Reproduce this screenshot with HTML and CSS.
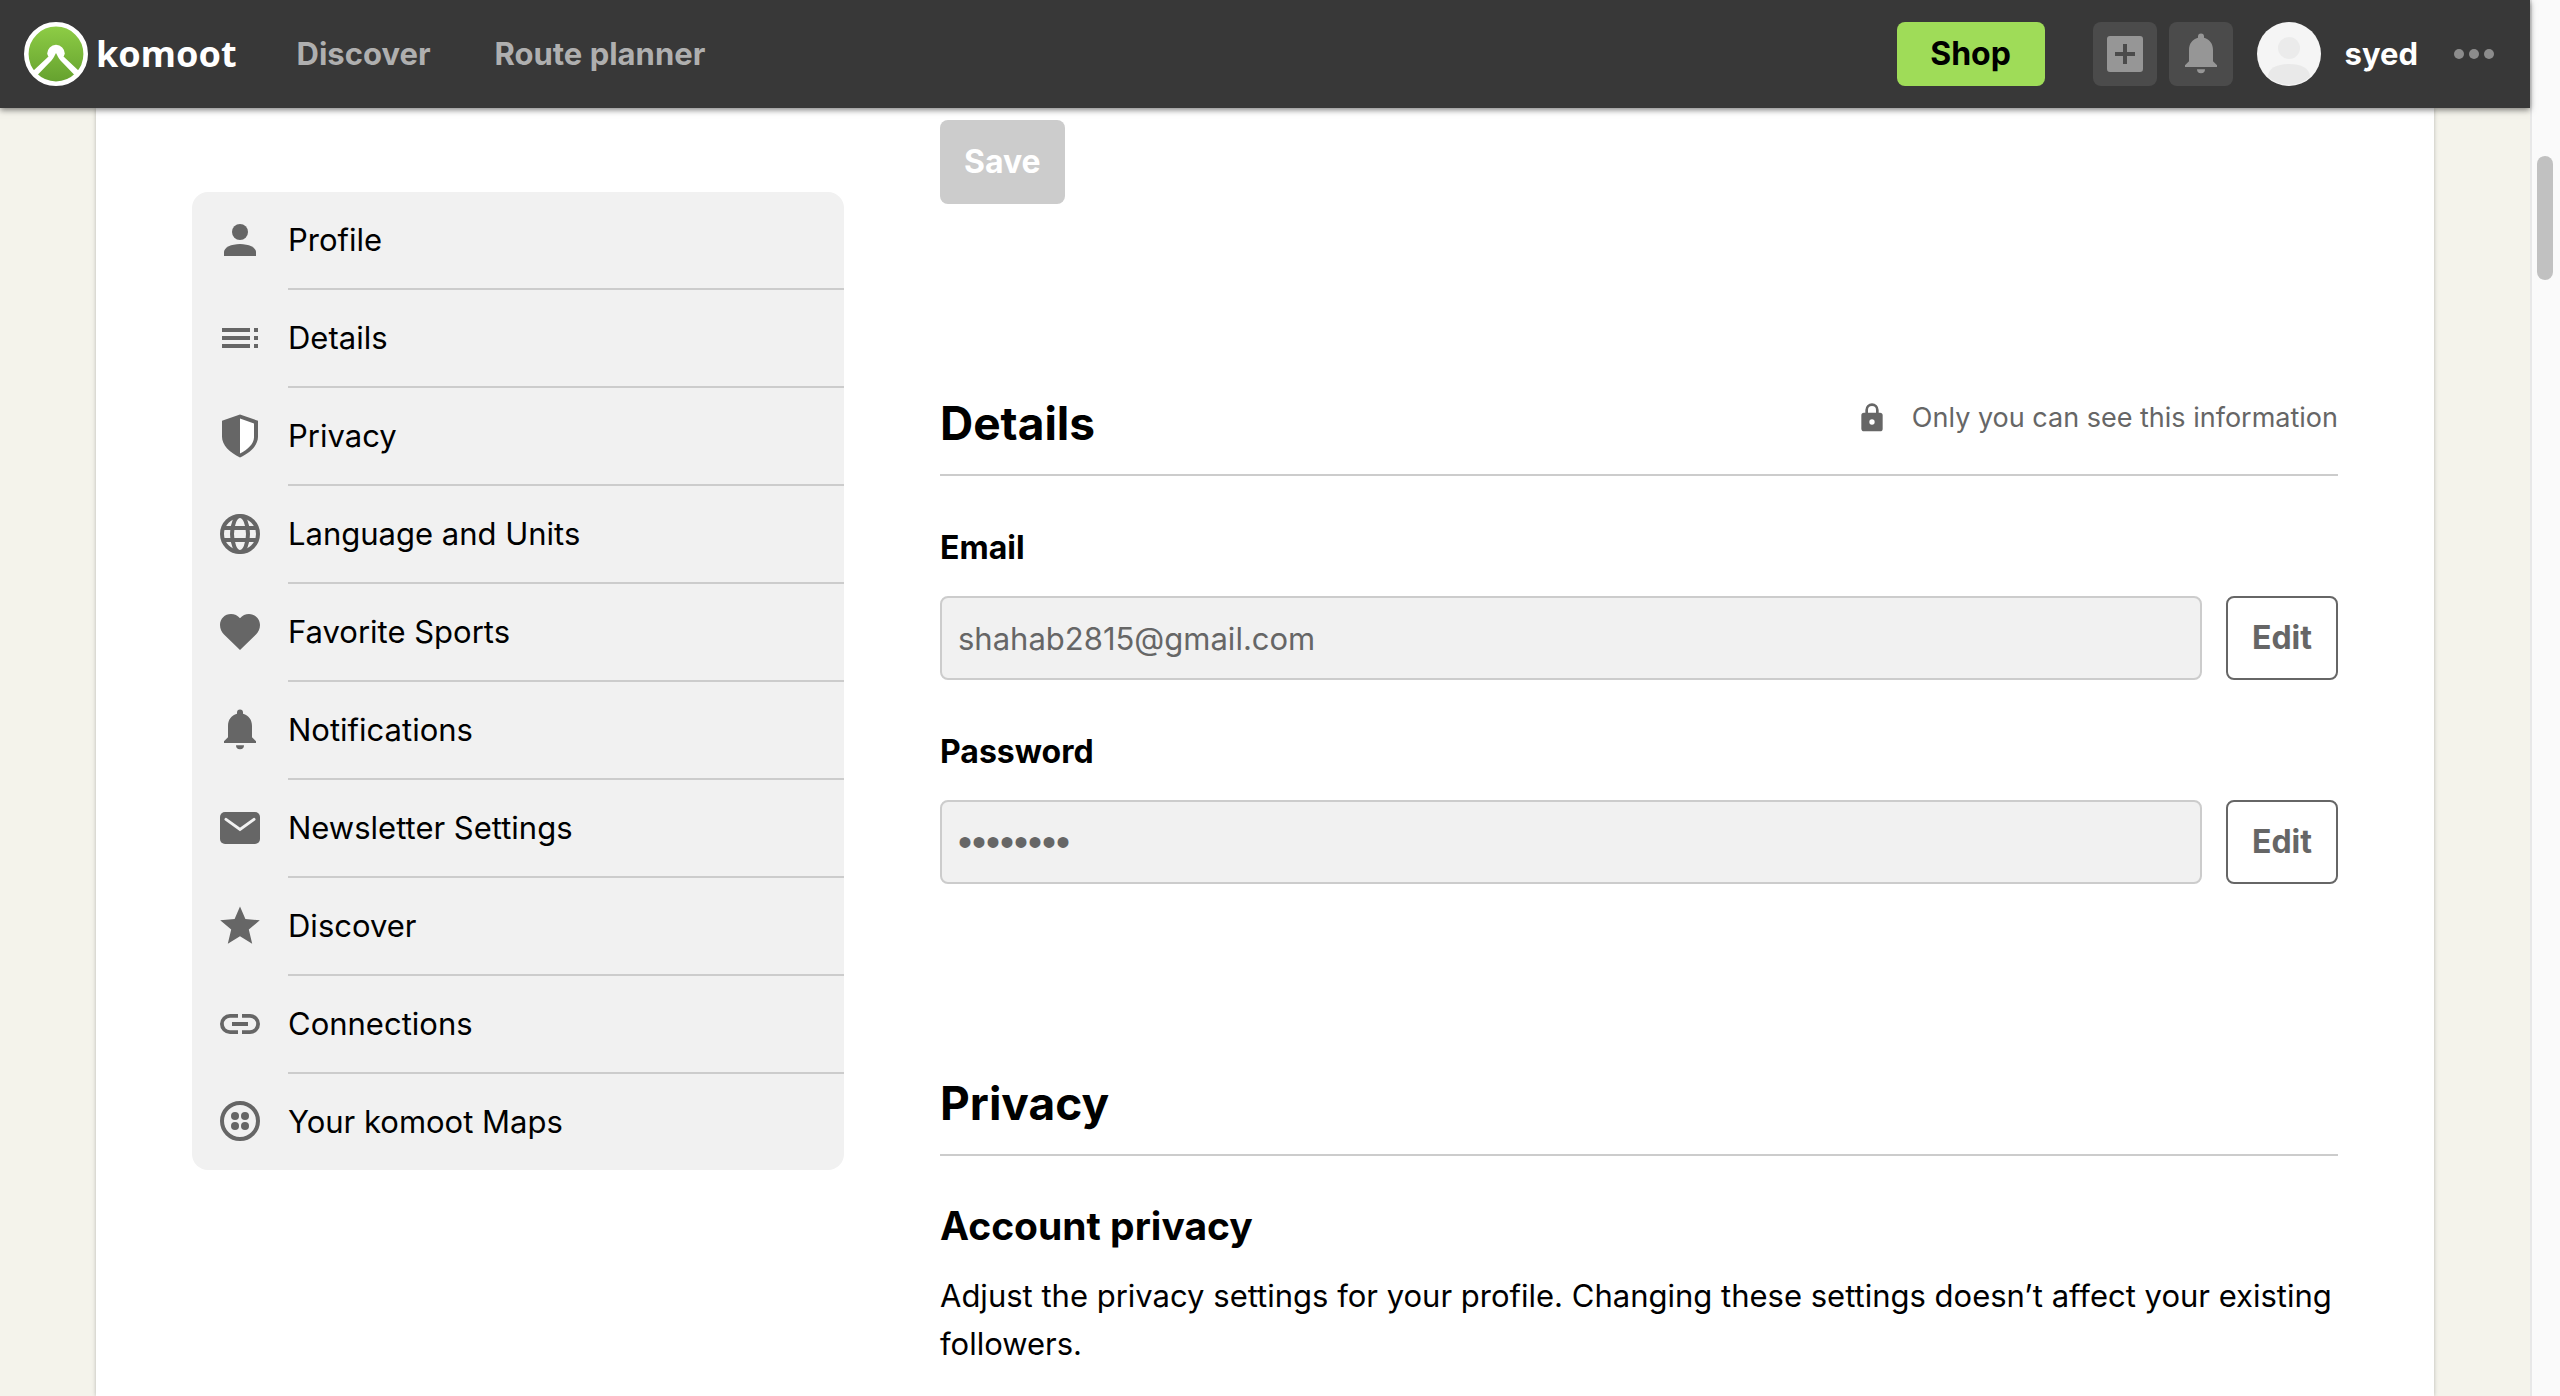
FILE: index.html
```html
<!DOCTYPE html>
<html lang="en">
<head>
<meta charset="utf-8">
<title>komoot – Account settings</title>
<meta name="viewport" content="width=device-width, initial-scale=1">
<link rel="stylesheet" href="styles.css">
</head>
<body>
<div class="viewport">
  <div class="app">
    <header class="topbar">
      <a class="brand" href="#">
        <svg class="brand-mark" viewBox="0 0 64 64" aria-hidden="true">
          <defs>
            <linearGradient id="leaf" x1="0" y1="0" x2="0" y2="1">
              <stop offset="0" stop-color="#8fce46"/>
              <stop offset="1" stop-color="#64a02e"/>
            </linearGradient>
          </defs>
          <circle cx="32" cy="32" r="29.700" fill="url(#leaf)" stroke="#fff" stroke-width="4.600"/>
          <path d="M9 49 24.500 34.500C23.800 33.500 23.200 32.300 23.200 31.600A8.800 8.800 0 0 1 40.800 31.600C40.800 32.300 40.200 33.500 39.500 34.500L55 49 51 53.500 36.500 38.500C34.500 36.500 33.500 33.500 32 31 30.500 33.500 29.500 36.500 27.500 38.500L13 53.500Z" fill="#fff"/>
        </svg>
        <span class="brand-name">komoot</span>
      </a>
      <nav class="topnav">
        <a href="#">Discover</a>
        <a href="#">Route planner</a>
      </nav>
      <div class="actions">
        <button class="shop" type="button">Shop</button>
        <button class="square" type="button" aria-label="Create">
          <svg class="icon" viewBox="0 0 24 24"><path d="M19.500 3h-15A1.500 1.500 0 0 0 3 4.500v15A1.500 1.500 0 0 0 4.500 21h15a1.500 1.500 0 0 0 1.500-1.500v-15A1.500 1.500 0 0 0 19.500 3zM17 13h-4v4h-2v-4H7v-2h4V7h2v4h4z"/></svg>
        </button>
        <button class="square" type="button" aria-label="Notifications">
          <svg class="icon" viewBox="0 0 24 24"><path d="M10 19.600h4a2 2 0 0 1-4 0zM20 17.600v.900H4v-.900l2-2V10c0-3 1.600-5.400 4.500-6.100v-.600a1.500 1.500 0 0 1 3 0v.600C16.400 4.600 18 7 18 10v5.600z"/></svg>
        </button>
        <a class="user" href="#">
          <svg class="avatar" viewBox="0 0 64 64" aria-hidden="true"><circle cx="32" cy="32" r="32" fill="#f5f5f5"/><circle cx="32" cy="26" r="11" fill="#ebebeb"/><path d="M11 55c0-9 9-13 21-13s21 4 21 13a32 32 0 0 1-42 0z" fill="#e9e9e9"/></svg>
          <span>syed</span>
        </a>
        <button class="more" type="button" aria-label="More">
          <svg viewBox="0 0 40 14"><circle cx="5" cy="7" r="5"/><circle cx="20" cy="7" r="5"/><circle cx="35" cy="7" r="5"/></svg>
        </button>
      </div>
    </header>

    <main class="page">
      <nav class="menu" aria-label="Settings">
        <a href="#"><svg class="icon" viewBox="0 0 24 24"><circle cx="12" cy="8" r="4"/><path d="M12 14c-4.400 0-8 1.800-8 4v2h16v-2c0-2.200-3.600-4-8-4z"/></svg><span>Profile</span></a>
        <a href="#"><svg class="icon" viewBox="0 0 24 24"><path d="M3 9h14V7H3zm0 4h14v-2H3zm0 4h14v-2H3zm16 0h2v-2h-2zm0-10v2h2V7zm0 6h2v-2h-2z"/></svg><span>Details</span></a>
        <a href="#"><svg class="icon" viewBox="0 0 24 24"><path fill="#fff" d="M12 3l7 2.500V12c0 3.500-3 6.700-7 8.800z"/><path fill-rule="evenodd" d="M12 1.200 3 4.400v8c0 4.200 3.900 8 9 10.300 5.100-2.300 9-6.100 9-10.300v-8zM12 3.200l7 2.500v7c0 3-3 6-7 8z"/></svg><span>Privacy</span></a>
        <a href="#"><svg class="icon line" viewBox="0 0 24 24"><circle cx="12" cy="12" r="9"/><ellipse cx="12" cy="12" rx="4" ry="9"/><path d="M3.500 9h17M3.500 15h17"/></svg><span>Language and Units</span></a>
        <a href="#"><svg class="icon" viewBox="0 0 24 24"><path d="M12 21 4 13.200C2.800 12 2 10.400 2 8.500 2 5.400 4.400 3 7.500 3c1.700 0 3.400.800 4.500 2.100C13.100 3.800 14.800 3 16.500 3 19.600 3 22 5.400 22 8.500c0 1.900-.800 3.500-2 4.700z"/></svg><span>Favorite Sports</span></a>
        <a href="#"><svg class="icon" viewBox="0 0 24 24"><path d="M10 19.600h4a2 2 0 0 1-4 0zM20 17.600v.900H4v-.900l2-2V10c0-3 1.600-5.400 4.500-6.100v-.600a1.500 1.500 0 0 1 3 0v.600C16.400 4.600 18 7 18 10v5.600z"/></svg><span>Notifications</span></a>
        <a href="#"><svg class="icon" viewBox="0 0 24 24"><rect x="2" y="4" width="20" height="16" rx="2.500"/><path d="m5 7.700 7 5 7-5" fill="none" stroke="#f1f1f1" stroke-width="1.500" stroke-linecap="round"/></svg><span>Newsletter Settings</span></a>
        <a href="#"><svg class="icon" viewBox="0 0 24 24"><path d="m12 2.200 2.700 6.300 7.200.600-5.500 4.700 1.700 7.100-6.100-3.800-6.100 3.800 1.700-7.100L2.100 9.100l7.200-.600z"/></svg><span>Discover</span></a>
        <a href="#"><svg class="icon" viewBox="0 0 24 24"><path d="M3.900 12A3.100 3.100 0 0 1 7 8.900h4V7H7a5 5 0 0 0 0 10h4v-1.900H7A3.100 3.100 0 0 1 3.900 12zM8 13h8v-2H8zm9-6h-4v1.900h4a3.100 3.100 0 0 1 0 6.200h-4V17h4a5 5 0 0 0 0-10z"/></svg><span>Connections</span></a>
        <a href="#"><svg class="icon" viewBox="0 0 24 24"><circle cx="12" cy="12" r="9" fill="none" stroke="#666" stroke-width="2"/><circle cx="9.500" cy="9.500" r="2"/><circle cx="14.500" cy="9.500" r="2"/><circle cx="9.500" cy="14.500" r="2"/><circle cx="14.500" cy="14.500" r="2"/></svg><span>Your komoot Maps</span></a>
      </nav>

      <div class="content">
        <button class="save" type="button" disabled>Save</button>

        <section class="section">
          <div class="section-head">
            <h2>Details</h2>
            <p class="hint">
              <svg viewBox="0 0 24 24" aria-hidden="true"><path fill-rule="evenodd" d="M18 8h-1V6A5 5 0 0 0 7 6v2H6a2 2 0 0 0-2 2v10c0 1.100.900 2 2 2h12a2 2 0 0 0 2-2V10a2 2 0 0 0-2-2zm-6 9a2 2 0 1 1 0-4 2 2 0 0 1 0 4zm3-9H9V6a3 3 0 0 1 6 0z"/></svg>
              Only you can see this information
            </p>
          </div>
          <div class="field">
            <label for="email">Email</label>
            <div class="field-row">
              <input id="email" type="email" value="shahab2815@gmail.com" readonly>
              <button class="edit" type="button">Edit</button>
            </div>
          </div>
          <div class="field">
            <label for="password">Password</label>
            <div class="field-row">
              <input id="password" class="masked" type="password" value="password" readonly>
              <button class="edit" type="button">Edit</button>
            </div>
          </div>
        </section>

        <section class="section">
          <div class="section-head">
            <h2>Privacy</h2>
          </div>
          <h3>Account privacy</h3>
          <p class="copy">Adjust the privacy settings for your profile. Changing these settings doesn’t affect your existing followers.</p>
        </section>
      </div>
    </main>
  </div>
  <div class="scrollbar" aria-hidden="true"><div class="thumb"></div></div>
</div>
</body>
</html>
```
FILE: styles.css
```css
* {
  box-sizing: border-box;
}

body {
  margin: 0;
  font-family: Inter, "Liberation Sans", sans-serif;
  font-size: 31px;
  line-height: 48px;
  color: #000;
  background: #f4f3eb;
}

a {
  color: inherit;
  text-decoration: none;
}

button,
input {
  font: inherit;
}

h2,
h3,
p {
  margin: 0;
}

.viewport {
  display: flex;
  height: 100vh;
  overflow: hidden;
}

.app {
  flex: 1;
  display: flex;
  flex-direction: column;
  min-width: 0;
}

/* Top bar */

.topbar {
  position: relative;
  z-index: 1;
  flex: none;
  display: flex;
  align-items: center;
  height: 108px;
  padding: 0 36px 0 24px;
  background: #383838;
  box-shadow: 0 2px 6px rgba(0, 0, 0, 0.5);
}

.brand {
  display: flex;
  align-items: center;
  gap: 8px;
  color: #fff;
}

.brand-mark {
  width: 64px;
  height: 64px;
}

.brand-name {
  font-family: "Noto Sans", sans-serif;
  font-size: 36px;
  font-weight: 700;
}

.topnav {
  display: flex;
  gap: 64px;
  margin-left: 60px;
  font-weight: 700;
  color: #afafaf;
}

.actions {
  display: flex;
  align-items: center;
  margin-left: auto;
}

.shop {
  width: 148px;
  height: 64px;
  margin-right: 48px;
  padding: 0;
  border: 0;
  border-radius: 8px;
  background: #9fdc58;
  color: #000;
  font-size: 32px;
  font-weight: 700;
}

.square {
  display: grid;
  place-items: center;
  width: 64px;
  height: 64px;
  margin-right: 12px;
  padding: 0;
  border: 0;
  border-radius: 8px;
  background: #4b4b4b;
}

.square .icon {
  fill: #969696;
}

.user {
  display: flex;
  align-items: center;
  gap: 24px;
  margin-left: 12px;
  font-weight: 700;
  color: #fff;
}

.avatar {
  width: 64px;
  height: 64px;
}

.more {
  display: grid;
  margin-left: 36px;
  padding: 0;
  border: 0;
  background: none;
}

.more svg {
  width: 40px;
  height: 14px;
  fill: #8c8c8c;
}

.icon {
  flex: none;
  width: 48px;
  height: 48px;
  fill: #666;
}

.line {
  fill: none;
  stroke: #666;
  stroke-width: 2;
}

/* Page */

.page {
  flex: 1;
  display: flex;
  align-items: flex-start;
  gap: 96px;
  margin: 0 96px;
  padding: 0 96px;
  background: #fff;
  box-shadow: 0 0 4px rgba(0, 0, 0, 0.25);
}

.menu {
  flex: 0 0 652px;
  margin-top: 84px;
  border-radius: 16px;
  background: #f1f1f1;
}

.menu a {
  display: flex;
  align-items: center;
  gap: 24px;
  padding-left: 24px;
}

.menu .icon {
  margin-bottom: 2px;
}

.menu span {
  flex: 1;
  padding: 24px 0;
  border-bottom: 2px solid #ccc;
}

.menu a:last-child span {
  border-bottom: 0;
}

.content {
  flex: 1;
  min-width: 0;
}

.save,
.edit {
  height: 84px;
  padding: 0 24px;
  border-radius: 8px;
  font-size: 32px;
  font-weight: 700;
}

.save {
  display: block;
  margin-top: 12px;
  border: 0;
  background: #ccc;
  color: #fff;
}

.section {
  padding-top: 180px;
}

.section-head {
  display: flex;
  align-items: flex-start;
  justify-content: space-between;
  padding-bottom: 16px;
  border-bottom: 2px solid #ccc;
}

h2 {
  padding-top: 4px;
  font-size: 46px;
  line-height: 70px;
  font-weight: 700;
}

h3 {
  margin-top: 40px;
  font-size: 39px;
  line-height: 60px;
  font-weight: 700;
}

.hint {
  display: flex;
  align-items: center;
  gap: 24px;
  font-size: 27px;
  line-height: 68px;
  color: #666;
}

.hint svg {
  width: 32px;
  height: 32px;
  fill: #666;
}

.field {
  margin-top: 48px;
}

.field label {
  display: block;
  font-size: 32px;
  font-weight: 700;
}

.field-row {
  display: flex;
  gap: 24px;
  margin-top: 24px;
}

.field input {
  flex: 1;
  min-width: 0;
  height: 84px;
  padding: 0 16px;
  border: 2px solid #ccc;
  border-radius: 8px;
  background: #f1f1f1;
  color: #666;
  outline: 0;
}

.field .masked {
  font-family: "Liberation Sans", sans-serif;
  font-size: 40px;
}

.edit {
  border: 2px solid #666;
  background: #fff;
  color: #666;
}

.copy {
  margin-top: 16px;
}

/* Scroll track */

.scrollbar {
  flex: none;
  width: 30px;
  padding: 156px 7px 0 5px;
  border-left: 2px solid #e8e8e8;
  background: #fafafa;
}

.thumb {
  height: 124px;
  border-radius: 8px;
  background: #c1c1c1;
}
```
